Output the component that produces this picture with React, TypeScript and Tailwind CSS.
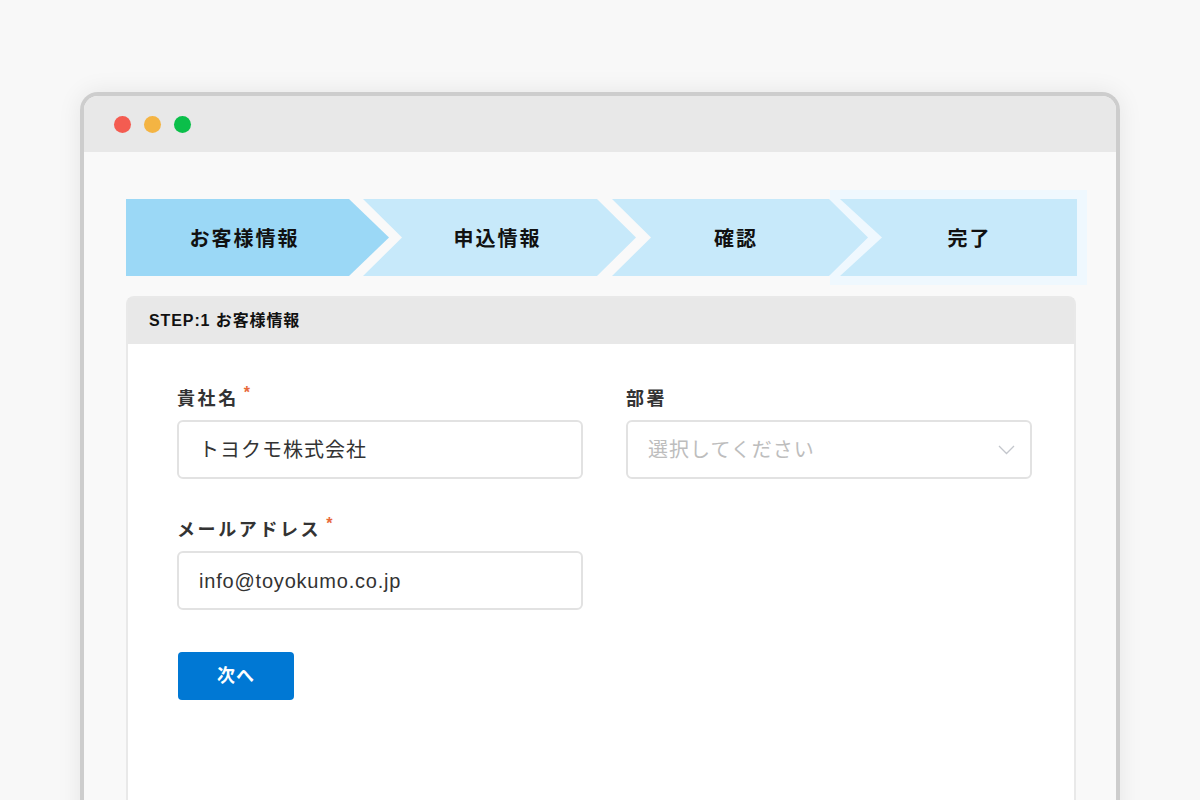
import React from "react";

const STEP_FIRST =
  "[clip-path:polygon(0_0,calc(100%_-_40px)_0,100%_50%,calc(100%_-_40px)_100%,0_100%)]";
const STEP_MID =
  "[clip-path:polygon(0_0,calc(100%_-_39px)_0,100%_50%,calc(100%_-_39px)_100%,0_100%,39px_50%)]";
const STEP_LAST =
  "[clip-path:polygon(0_0,100%_0,100%_100%,0_100%,42px_50%)]";

function Asterisk() {
  return (
    <span className="relative -top-[7px] ml-[5px] text-[16px] font-bold leading-none text-[#e8693a]">
      *
    </span>
  );
}

export default function App() {
  return (
    <div className="min-h-[800px] h-[800px] overflow-hidden bg-[#f8f8f8] pt-[92px] pl-[80px] font-['Liberation_Sans','Noto_Sans_CJK_JP',sans-serif]">
      <div className="w-[1040px] h-[760px] rounded-t-[18px] border-4 border-b-0 border-[#cdcdcd] bg-[#f9f9f9] shadow-[0_0_24px_rgba(0,0,0,0.08)] overflow-hidden">
        {/* title bar */}
        <div className="h-[56px] bg-[#e8e8e8] flex items-center pl-[30px] gap-[13px]">
          <div className="w-[17px] h-[17px] rounded-full bg-[#f45c51]" />
          <div className="w-[17px] h-[17px] rounded-full bg-[#f4b443]" />
          <div className="w-[17px] h-[17px] rounded-full bg-[#0bbf4a]" />
        </div>

        {/* content */}
        <div className="pt-[47px] pl-[42px] pr-[40px]">
          {/* step bar */}
          <div className="flex h-[77px] items-stretch font-['Noto_Sans_CJK_JP',sans-serif] text-[20px] font-bold tracking-[2px] text-[#111]">
            <div
              className={`relative z-10 w-[263px] shrink-0 bg-[#9bd8f6] flex items-center justify-center pr-[26px] ${STEP_FIRST}`}
            >
              お客様情報
            </div>
            <div
              className={`relative z-10 -ml-[26px] w-[273px] shrink-0 bg-[#c7e9fa] flex items-center justify-center pr-[4px] ${STEP_MID}`}
            >
              申込情報
            </div>
            <div
              className={`relative z-10 -ml-[24px] w-[256px] shrink-0 bg-[#c7e9fa] flex items-center justify-center pr-[8px] ${STEP_MID}`}
            >
              確認
            </div>
            <div className="-ml-[38px] -my-[9px] shrink-0 bg-[#eff8fe] py-[9px] px-[10px] flex">
              <div
                className={`w-[237px] bg-[#c7e9fa] flex items-center justify-center pl-[22px] ${STEP_LAST}`}
              >
                完了
              </div>
            </div>
          </div>

          {/* card */}
          <div className="mt-[20px] h-[600px] rounded-t-[8px] border-2 border-b-0 border-[#e9e9e9] bg-white">
            <div className="h-[46px] bg-[#e8e8e8] flex items-center pl-[21px] text-[16px] font-bold text-[#111] tracking-[0.9px]">
              STEP:1 お客様情報
            </div>
            <div className="pt-[42px] pl-[49px]">
              <div className="grid grid-cols-[406px_406px] gap-x-[43px]">
                <div>
                  <div className="h-[26px] leading-[26px] text-[18px] font-bold tracking-[2.6px] text-[#333]">
                    貴社名
                    <Asterisk />
                  </div>
                  <div className="mt-[8px] h-[59px] rounded-[6px] border-2 border-[#e2e2e2] flex items-center pl-[20px] text-[20px] tracking-[1px] text-[#333]">
                    トヨクモ株式会社
                  </div>
                </div>
                <div>
                  <div className="h-[26px] leading-[26px] text-[18px] font-bold tracking-[2.6px] text-[#333]">
                    部署
                  </div>
                  <div className="mt-[8px] h-[59px] rounded-[6px] border-2 border-[#e2e2e2] flex items-center justify-between pl-[20px] pr-[15px] text-[20px] tracking-[1px] text-[#bdbdbd]">
                    <span>選択してください</span>
                    <svg width="17" height="10" viewBox="0 0 17 10" fill="none">
                      <polyline
                        points="1,1 8.5,8.5 16,1"
                        stroke="#c3c6cc"
                        strokeWidth="1.3"
                        fill="none"
                      />
                    </svg>
                  </div>
                </div>
                <div className="mt-[38px]">
                  <div className="h-[26px] leading-[26px] text-[18px] font-bold tracking-[2.6px] text-[#333]">
                    メールアドレス
                    <Asterisk />
                  </div>
                  <div className="mt-[8px] h-[59px] rounded-[6px] border-2 border-[#e2e2e2] flex items-center pl-[20px] text-[20px] tracking-[0.8px] text-[#333]">
                    info@toyokumo.co.jp
                  </div>
                </div>
              </div>
              <button className="mt-[42px] ml-[1px] w-[116px] h-[48px] rounded-[4px] bg-[#0078d4] text-white text-[18px] font-bold tracking-[1px] flex items-center justify-center">
                次へ
              </button>
            </div>
          </div>
        </div>
      </div>
    </div>
  );
}
